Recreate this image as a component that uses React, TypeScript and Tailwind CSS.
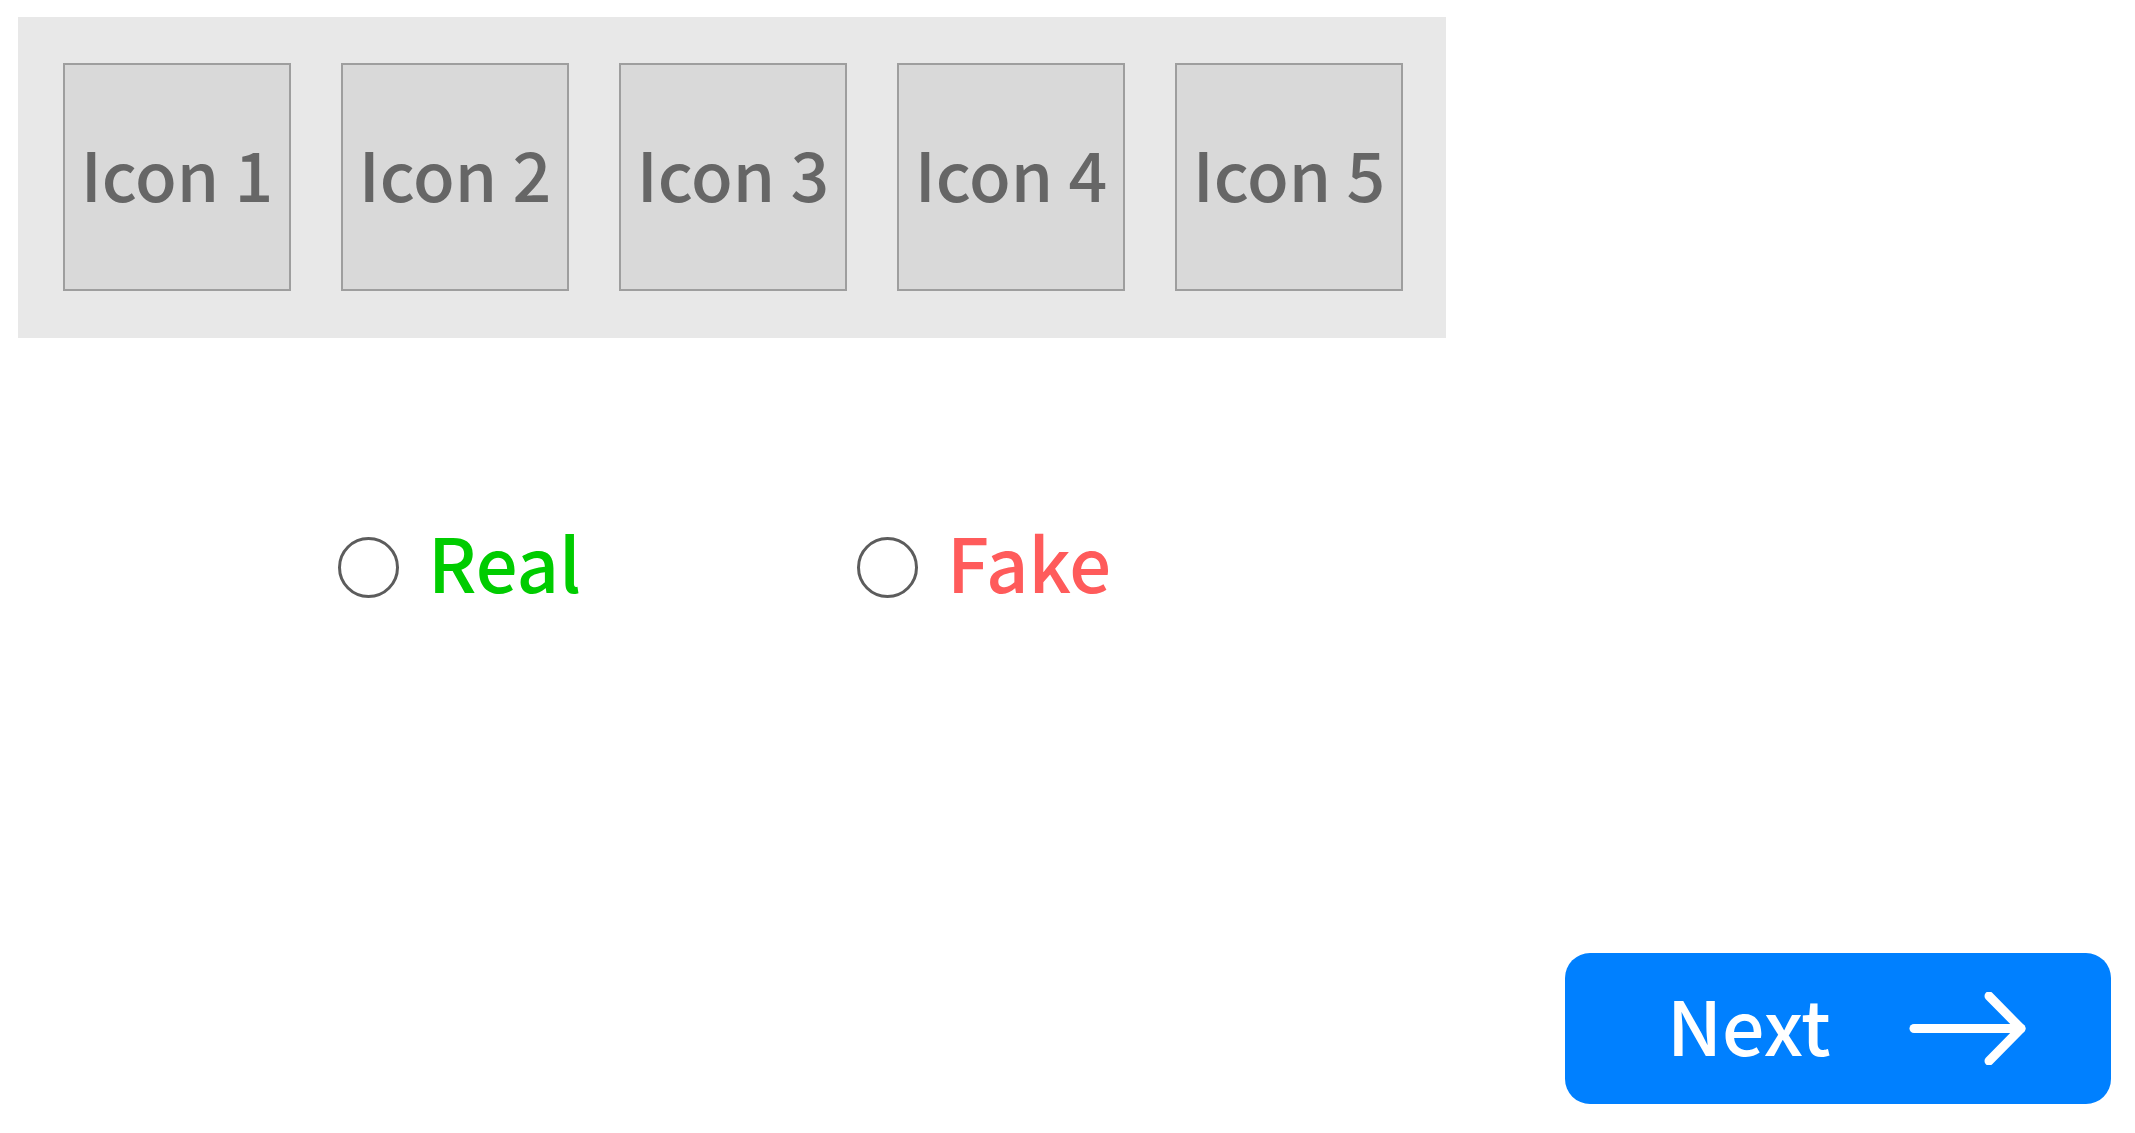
const icons = ['Icon 1', 'Icon 2', 'Icon 3', 'Icon 4', 'Icon 5'];

const Radio = ({ label, color, width }: { label: string; color: string; width: string }) => (
  <label className={`flex items-center gap-[29px] ${width}`}>
    <span className="w-[61px] h-[61px] rounded-full border-[3px] border-[#5c5c5c] bg-white shrink-0" />
    <span className={`text-[74px] leading-none font-medium -mt-[6px] mb-[6px] ${color}`}>{label}</span>
  </label>
);

const App = () => {
  return (
    <div
      className="w-[2135px] h-[1133px] bg-white flex flex-col pt-[17px] pl-[18px] pr-[24px] pb-[29px]"
      style={{ fontFamily: '"Noto Sans CJK SC", "Noto Sans", sans-serif' }}
    >
      <div className="w-[1428px] h-[321px] bg-[#e8e8e8] flex items-start gap-[50px] pt-[46px] pl-[45px]">
        {icons.map((name) => (
          <div
            key={name}
            className="w-[228px] h-[228px] bg-[#d9d9d9] border-2 border-[#9e9e9e] flex items-center justify-center pb-[9px]"
          >
            <span className="text-[68px] leading-none font-medium text-[#666666] whitespace-nowrap">{name}</span>
          </div>
        ))}
      </div>

      <div className="flex items-center mt-[192px] ml-[320px]">
        <Radio label="Real" color="text-[#00cc00]" width="w-[519px]" />
        <Radio label="Fake" color="text-[#ff5b5b]" width="w-auto" />
      </div>

      <button className="mt-auto self-end w-[546px] h-[151px] rounded-[25px] bg-[#0080ff] flex items-center pl-[102px] gap-[78px] text-white">
        <span className="text-[75px] leading-none font-medium mb-[10px]">Next</span>
        <svg width="117" height="73" viewBox="0 0 117 73" fill="none" stroke="white" strokeWidth="9" strokeLinecap="round" strokeLinejoin="round">
          <path d="M5 36.5H112" />
          <path d="M80 4L112 36.5L80 69" />
        </svg>
      </button>
    </div>
  );
};

export default App;
